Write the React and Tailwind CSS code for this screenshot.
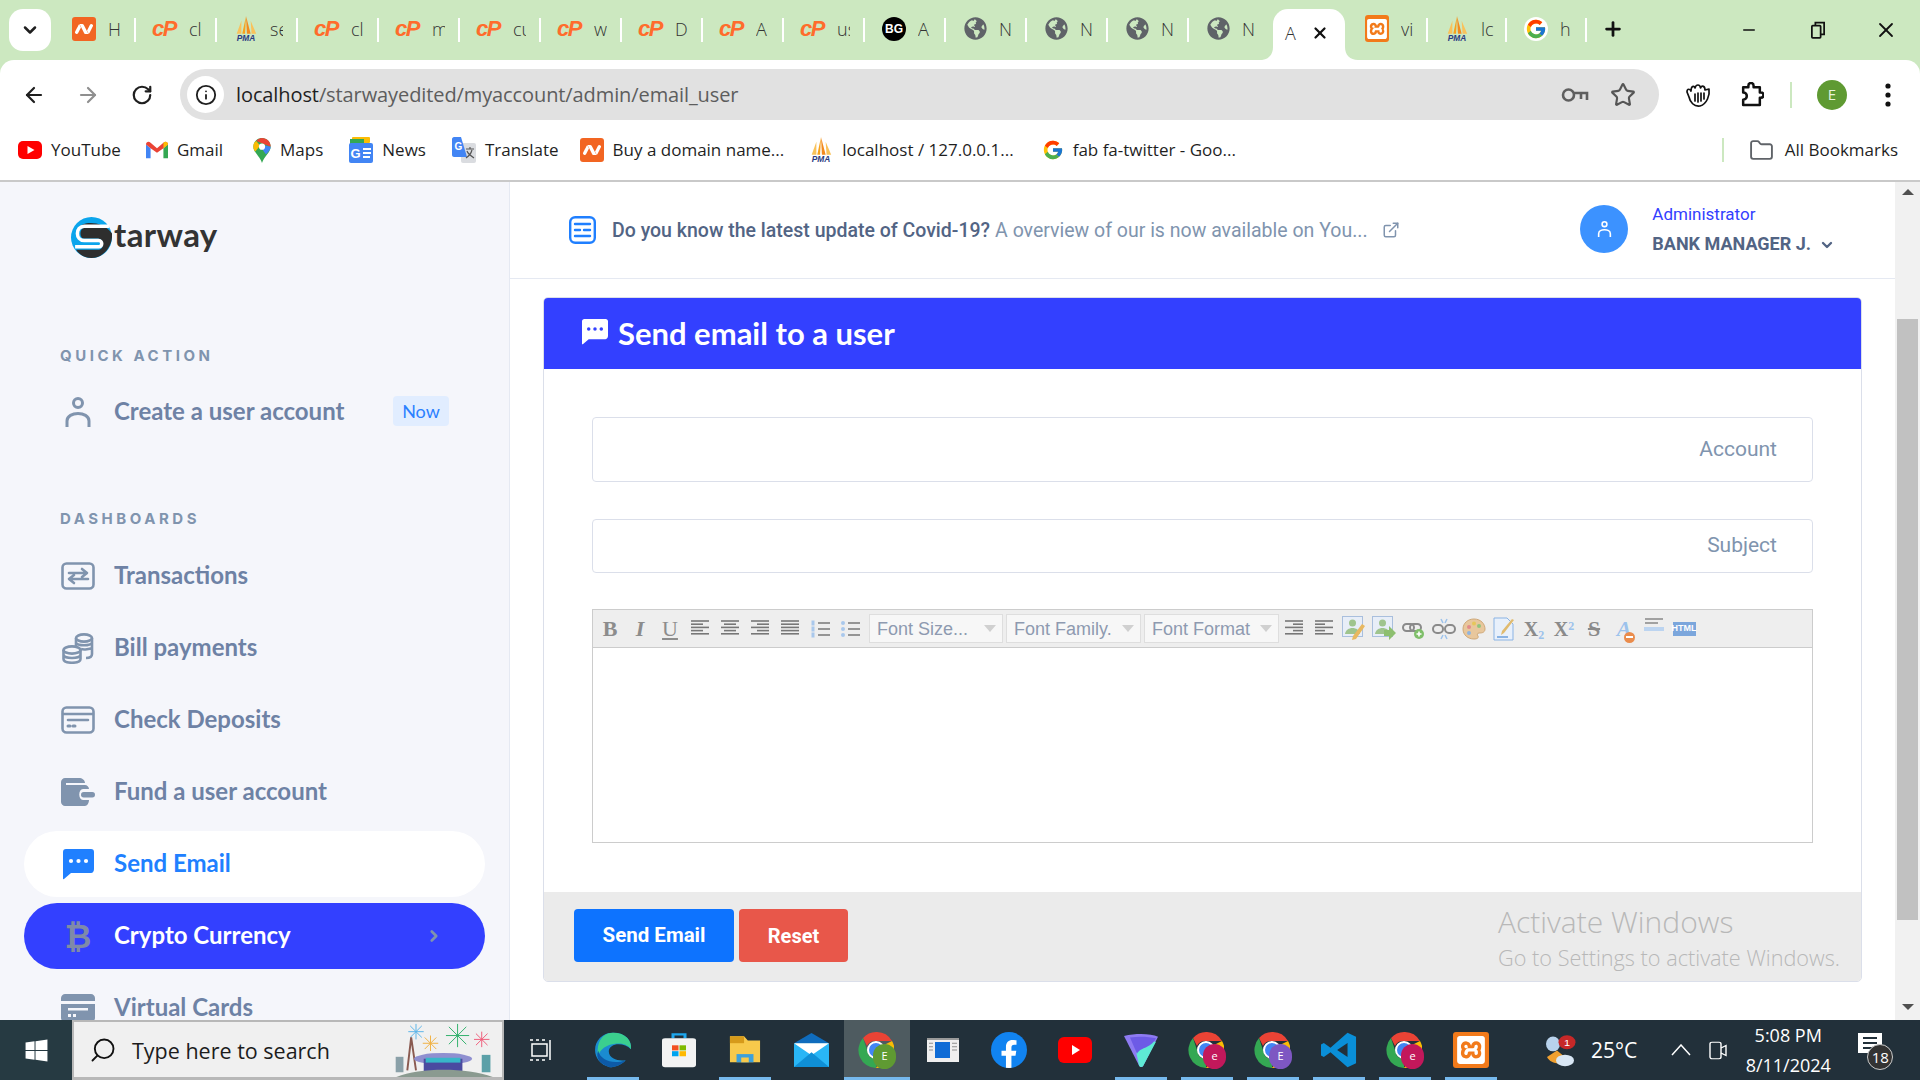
import React from 'react';
import { FcGoogle } from 'react-icons/fc';
import { SiXampp, SiNamecheap } from 'react-icons/si';
import { FaFacebookF, FaGlobeAmericas, FaWindows } from 'react-icons/fa';
import { ArrowLeft, ArrowRight, RotateCw, Star, ChevronDown, ChevronRight, Plus, X, Minus, Folder, Info, ExternalLink, Search } from 'lucide-react';

const uiFont = 'font-["Open_Sans",sans-serif]';
const navFont = 'font-["Lato",sans-serif]';

const Cp = () => <span className="font-['Liberation_Sans',sans-serif] font-bold italic text-[22px] leading-none tracking-[-1.5px] text-[#ff6c2c] pr-[2px]">cP</span>;
const Nc = () => (
  <span className="w-[24px] h-[24px] rounded-[3px] bg-[#f26522] flex items-center justify-center shrink-0">
    <SiNamecheap className="w-[18px] h-[18px] text-white" />
  </span>
);
const Pma = () => (
  <svg viewBox="0 0 24 28" className="w-[24px] h-[26px] shrink-0">
    <path d="M12 0 L8 19 H11 Z" fill="#f7a21b" />
    <path d="M12 0 L13 19 H17 Z" fill="#f38b1e" />
    <path d="M7 5 L2 19 H7 Z" fill="#f9c25a" />
    <path d="M17 5 L18 19 H23 Z" fill="#f9c25a" />
    <text x="12" y="27" textAnchor="middle" fontSize="9" fontWeight="700" fontStyle="italic" fontFamily="Liberation Sans, sans-serif" fill="#2b3a80">PMA</text>
  </svg>
);
const Bg = () => <span className="w-[24px] h-[24px] rounded-full bg-black text-white text-[12px] font-bold flex items-center justify-center font-['Liberation_Sans',sans-serif]">BG</span>;
const Globe = () => <FaGlobeAmericas className="w-[23px] h-[23px] text-[#5f6368]" />;
const Xampp = () => (
  <span className="w-[24px] h-[27px] rounded-[3px] bg-[#f27a1a] flex items-center justify-center">
    <SiXampp className="w-[20px] h-[20px] text-white" />
  </span>
);
const GIcon = () => <span className="w-[24px] h-[24px] rounded-full bg-white flex items-center justify-center"><FcGoogle className="w-[22px] h-[22px]" /></span>;

const tabs = [
  { icon: <Nc />, label: 'H' },
  { icon: <Cp />, label: 'cl' },
  { icon: <Pma />, label: 'se' },
  { icon: <Cp />, label: 'cl' },
  { icon: <Cp />, label: 'm' },
  { icon: <Cp />, label: 'cu' },
  { icon: <Cp />, label: 'w' },
  { icon: <Cp />, label: 'D' },
  { icon: <Cp />, label: 'A' },
  { icon: <Cp />, label: 'us' },
  { icon: <Bg />, label: 'A' },
  { icon: <Globe />, label: 'N' },
  { icon: <Globe />, label: 'N' },
  { icon: <Globe />, label: 'N' },
  { icon: <Globe />, label: 'N', last: true },
];

const Tab = ({ icon, label, last, width = 'w-[81px]', pad = 'pl-[17px]' }) => (
  <div className={`${width} h-[60px] pb-[3px] flex items-center shrink-0 relative`}>
    <div className={`${pad} flex items-center gap-[12px]`}>
      <span className="w-[24px] flex justify-center">{icon}</span>
      <span className="w-[13px] overflow-hidden text-[18px] font-light text-[#333] leading-none">{label}</span>
    </div>
    {!last && <span className="absolute right-0 top-[18px] h-[24px] w-[2px] bg-white" />}
  </div>
);

const TabStrip = () => (
  <div className={`h-[60px] bg-[#cce8c0] flex items-start pl-[9px] ${uiFont}`}>
    <div className="mt-[9px] w-[42px] h-[42px] rounded-[14px] bg-white flex items-center justify-center mr-[4px] shrink-0">
      <ChevronDown className="w-[20px] h-[20px] text-[#1f1f1f]" strokeWidth={3} />
    </div>
    {tabs.map((t, i) => <Tab key={i} {...t} width={t.last ? 'w-[84px]' : 'w-[81px]'} />)}
    <div className="relative mt-[9px] w-[72px] h-[51px] bg-white rounded-t-[15px] flex items-center pl-[12px] pb-[3px] shrink-0">
      <svg className="absolute -left-[13px] bottom-0 w-[13px] h-[13px]" viewBox="0 0 13 13"><path d="M13 0 V13 H0 C8 13 13 8 13 0 Z" fill="#fff" /></svg>
      <svg className="absolute -right-[13px] bottom-0 w-[13px] h-[13px]" viewBox="0 0 13 13"><path d="M0 0 V13 H13 C5 13 0 8 0 0 Z" fill="#fff" /></svg>
      <span className="text-[18px] font-light text-[#333] leading-none">A</span>
      <X className="w-[18px] h-[18px] ml-[15px] text-[#111]" strokeWidth={3} />
    </div>
    <Tab icon={<Xampp />} label="vi" width="w-[83px]" pad="pl-[20px]" />
    <Tab icon={<Pma />} label="lc" width="w-[79px]" />
    <Tab icon={<GIcon />} label="h" width="w-[80px]" />
    <div className="h-[60px] w-[52px] flex items-center justify-center pb-[3px]">
      <Plus className="w-[22px] h-[22px] text-[#111]" strokeWidth={3} />
    </div>
    <div className="flex-1" />
    <div className="h-[60px] flex items-center pb-[1px]">
      <span className="w-[69px] flex justify-center"><Minus className="w-[18px] h-[18px] text-[#111]" strokeWidth={2} /></span>
      <span className="w-[69px] flex justify-center">
        <svg viewBox="0 0 16 20" className="w-[14px] h-[22px]" fill="none" stroke="#111" strokeWidth="2"><rect x="1" y="5" width="10" height="14" rx="1" /><path d="M5 5 V1.5 H15 V15 H11" /></svg>
      </span>
      <span className="w-[68px] flex justify-center"><X className="w-[24px] h-[24px] text-[#111]" strokeWidth={1.8} /></span>
    </div>
  </div>
);

const Toolbar = () => (
  <div className={`h-[60px] bg-[#cce8c0] ${uiFont}`}>
    <div className="h-[60px] bg-white rounded-t-[14px] flex items-start pt-[9px]">
      <span className="w-[33px] ml-[17px] h-[51px] flex items-center justify-center"><ArrowLeft className="w-[24px] h-[24px] text-[#1f1f1f]" strokeWidth={2.2} /></span>
      <span className="w-[33px] ml-[21px] h-[51px] flex items-center justify-center"><ArrowRight className="w-[24px] h-[24px] text-[#8f8f8f]" strokeWidth={2.2} /></span>
      <span className="w-[33px] ml-[21px] h-[51px] flex items-center justify-center"><RotateCw className="w-[22px] h-[22px] text-[#1f1f1f]" strokeWidth={2.4} /></span>
      <div className="ml-[22px] w-[1479px] h-[51px] rounded-full bg-[#e1e1e1] flex items-center pl-[7px]">
        <span className="w-[37px] h-[37px] rounded-full bg-white flex items-center justify-center"><Info className="w-[22px] h-[22px] text-[#1f1f1f]" strokeWidth={2} /></span>
        <span className="ml-[12px] text-[20px] tracking-[-0.1px] text-[#5d5d5d] leading-none">
          <span className="text-[#1f1f1f]">localhost</span>/starwayedited/myaccount/admin/email_user
        </span>
        <div className="flex-1" />
        <svg viewBox="0 0 28 18" className="w-[28px] h-[18px] mr-[21px]" fill="none" stroke="#5f5f5f" strokeWidth="2.6">
          <circle cx="7.5" cy="9" r="5.5" /><path d="M13 7 H26 V14 M20 8 V13" />
        </svg>
        <Star className="w-[26px] h-[26px] text-[#555] mr-[23px]" strokeWidth={2} />
      </div>
      <div className="h-[51px] flex items-center">
        <svg viewBox="0 0 26 26" className="ml-[26px] w-[26px] h-[26px]" fill="none" stroke="#111" strokeWidth="1.7" strokeLinecap="round" strokeLinejoin="round">
          <path d="M2 10 C2 6 5 7 6 9 C6 4 9 3 10 6 C11 2 15 2 15.5 6 C17 3 20 4 20 8 L24 7 C25 13 22 22 15 24 C9 25 5 20 4 15 Z" />
          <path d="M10 12 V19 M13 11 V20 M16 11 V19 M19 11 V17" />
        </svg>
        <svg viewBox="0 0 24 24" className="ml-[28px] w-[25px] h-[25px]" fill="none" stroke="#111" strokeWidth="2.4" strokeLinejoin="round">
          <path d="M4 5 H9 V3.5 A2.5 2.5 0 0 1 14 3.5 V5 H20 V10 H21 A2.5 2.5 0 0 1 21 15 H20 V22 H4 V17 A2.5 2.5 0 0 0 4 10 Z" />
        </svg>
        <span className="ml-[26px] w-[2px] h-[26px] bg-[#cce8c0]" />
        <span className="ml-[25px] w-[30px] h-[30px] rounded-full bg-[#5f9a32] text-[#e8f3dc] text-[15px] flex items-center justify-center">E</span>
        <svg viewBox="0 0 6 26" className="ml-[38px] w-[6px] h-[26px]" fill="#111"><circle cx="3" cy="4" r="2.6" /><circle cx="3" cy="13" r="2.6" /><circle cx="3" cy="22" r="2.6" /></svg>
      </div>
    </div>
  </div>
);

const YtMark = () => (
  <svg viewBox="0 0 24 18" className="w-[24px] h-[18px] shrink-0"><rect width="24" height="18" rx="5" fill="#f00" /><path d="M9.5 5 L16.5 9 L9.5 13 Z" fill="#fff" /></svg>
);
const GmailMark = () => (
  <svg viewBox="0 0 24 18" className="w-[22px] h-[18px] shrink-0">
    <path d="M0 3 V18 H5 V7 Z" fill="#4285f4" /><path d="M24 3 V18 H19 V7 Z" fill="#34a853" />
    <path d="M0 3 C0 0 3 -1 5 1 L12 7 L19 1 C21 -1 24 0 24 3 L19 7 L12 12 L5 7 Z" fill="#ea4335" />
    <path d="M19 1 C21 -1 24 0 24 3 L19 7 Z" fill="#fbbc04" />
  </svg>
);
const MapsMark = () => (
  <svg viewBox="0 0 18 26" className="w-[18px] h-[25px] shrink-0">
    <path d="M9 0 C14 0 18 4 18 9 C18 15 11 19 9 26 C7 19 0 15 0 9 C0 4 4 0 9 0 Z" fill="#34a853" />
    <path d="M9 0 C14 0 18 4 18 9 L3 3 C5 1 7 0 9 0 Z" fill="#ea4335" />
    <path d="M18 9 C18 12 15 15 13 17 L5 6 Z" fill="#4285f4" />
    <path d="M0 9 C0 6 1 4 3 3 L7 8 L2 14 C1 13 0 11 0 9 Z" fill="#fbbc04" />
    <circle cx="9" cy="9" r="3.2" fill="#fff" />
  </svg>
);
const NewsMark = () => (
  <svg viewBox="0 0 24 26" className="w-[24px] h-[26px] shrink-0">
    <rect x="3" y="0" width="18" height="6" rx="1" fill="#fbbc04" /><rect x="1" y="2" width="14" height="5" fill="#34a853" />
    <rect x="0" y="6" width="24" height="20" rx="2" fill="#4285f4" />
    <text x="6.5" y="21" textAnchor="middle" fontSize="13" fontWeight="700" fontFamily="Liberation Sans, sans-serif" fill="#fff">G</text>
    <path d="M14 12 H22 M14 16 H22 M14 20 H21" stroke="#fff" strokeWidth="2" />
  </svg>
);
const TranslateMark = () => (
  <svg viewBox="0 0 24 26" className="w-[24px] h-[26px] shrink-0">
    <rect x="9" y="6" width="15" height="20" rx="2" fill="#dadce0" />
    <path d="M0 2 C0 1 1 0 2 0 H9 L15 20 H2 C1 20 0 19 0 18 Z" fill="#4285f4" />
    <text x="6.5" y="13" textAnchor="middle" fontSize="10" fontWeight="700" fontFamily="Liberation Sans, sans-serif" fill="#fff">G</text>
    <path d="M14 12 H22 M18 10 V12 M20 13 C19 17 17 19 14 21 M15 14 C16 17 19 19 22 21" stroke="#555" strokeWidth="1.2" fill="none" />
  </svg>
);

const Bookmark = ({ icon, label, className }) => (
  <div className={`flex items-center gap-[9px] ${className}`}>
    {icon}
    <span className="text-[17px] -mt-[2px] text-[#1f1f1f] leading-none whitespace-nowrap">{label}</span>
  </div>
);

const Bookmarks = () => (
  <div className={`h-[60px] bg-white flex items-center ${uiFont}`}>
    <Bookmark icon={<YtMark />} label="YouTube" className="ml-[18px]" />
    <Bookmark icon={<GmailMark />} label="Gmail" className="ml-[25px]" />
    <Bookmark icon={<MapsMark />} label="Maps" className="ml-[30px]" />
    <Bookmark icon={<NewsMark />} label="News" className="ml-[26px]" />
    <Bookmark icon={<TranslateMark />} label="Translate" className="ml-[26px]" />
    <Bookmark icon={<Nc />} label="Buy a domain name..." className="ml-[21px]" />
    <Bookmark icon={<Pma />} label="localhost / 127.0.0.1..." className="ml-[25px]" />
    <Bookmark icon={<FcGoogle className="w-[22px] h-[22px] shrink-0" />} label="fab fa-twitter - Goo..." className="ml-[28px]" />
    <div className="flex-1" />
    <span className="w-[2px] h-[24px] bg-[#cce8c0] mr-[25px]" />
    <Folder className="w-[25px] h-[25px] text-[#5f6368] mr-[11px]" strokeWidth={1.8} />
    <span className="text-[17px] -mt-[2px] text-[#1f1f1f] leading-none mr-[22px] whitespace-nowrap">All Bookmarks</span>
  </div>
);

const Logo = () => (
  <div className="flex items-center">
    <svg viewBox="0 0 40 40" className="w-[41px] h-[41px] shrink-0">
      <circle cx="20" cy="20" r="20" fill="#0ba5ec" />
      <path d="M7 11 C11 4 30 3 40 16 C41 28 32 40 20 40 C14 40 8 37 5 32 L26 32 C33 32 33 21 26 21 L13 21 C8 21 8 11 13 11 Z" fill="#2e2e2e" />
      <path d="M37 9 H13 C4 9 4 23 13 23 H27 C31 23 31 29 27 29 H4" fill="none" stroke="#fff" strokeWidth="3.4" />
    </svg>
    <span className="ml-[2px] -mt-[7px] font-['Lato',sans-serif] text-[33px] font-bold leading-none tracking-[0.4px] text-[#333]">tarway</span>
  </div>
);

const UserIcon = ({ className }) => (
  <svg viewBox="0 0 26 32" className={className} fill="none" stroke="currentColor" strokeWidth="3">
    <circle cx="13" cy="6" r="4.5" /><path d="M2 30 V24 C2 14 24 14 24 24 V30" />
  </svg>
);
const TransIcon = ({ className }) => (
  <svg viewBox="0 0 34 28" className={className} fill="none" stroke="currentColor" strokeWidth="2.6" strokeLinecap="round" strokeLinejoin="round">
    <rect x="1.5" y="1.5" width="31" height="25" rx="4" /><path d="M9 17 H27 M13 13 L8 17 L13 21 M25 11 H8 M21 7 L26 11 L21 15" />
  </svg>
);
const CoinsIcon = ({ className }) => (
  <svg viewBox="0 0 32 31" className={className} fill="none" stroke="currentColor" strokeWidth="2.6">
    <ellipse cx="22" cy="5" rx="8" ry="3.6" /><path d="M14 5 V13 M30 5 V21 C30 24 27 25 24 25 M14 10 C16 13 28 13 30 10 M19 16 C22 17 28 16 30 15" />
    <ellipse cx="10" cy="17" rx="8.5" ry="3.6" /><path d="M1.5 17 V26 C1.5 31 18.5 31 18.5 26 V17 M1.5 22 C3 26 17 26 18.5 22" />
  </svg>
);
const CardIcon = ({ className }) => (
  <svg viewBox="0 0 34 28" className={className} fill="none" stroke="currentColor" strokeWidth="2.6" strokeLinecap="round">
    <rect x="1.5" y="1.5" width="31" height="25" rx="4" /><path d="M2 8 H32 M7 14 H27" /><path d="M7 20 H9 M12 20 H14" strokeWidth="3" />
  </svg>
);
const WalletIcon = ({ className }) => (
  <svg viewBox="0 0 34 28" className={className} fill="currentColor">
    <path d="M4 0 H18 C21 0 24 2 24 5 H5 V7 H24 C26 7 28 9 28 11 H22 C17 11 17 22 22 22 H28 C28 25 26 28 24 28 H4 C2 28 0 26 0 24 V4 C0 2 2 0 4 0 Z" />
    <rect x="20" y="14" width="14" height="5.5" rx="2.7" />
  </svg>
);
const BubbleIcon = ({ className, dot = '#fff' }) => (
  <svg viewBox="0 0 31 31" className={className}>
    <path d="M3 0 H28 C30 0 31 1 31 3 V20 C31 22 30 24 28 24 H8 L1 30 C0.5 30.5 0 30 0 29.5 V3 C0 1 1 0 3 0 Z" fill="currentColor" />
    <circle cx="8" cy="12" r="2.1" fill={dot} /><circle cx="15.5" cy="12" r="2.1" fill={dot} /><circle cx="23" cy="12" r="2.1" fill={dot} />
  </svg>
);
const VirtualIcon = ({ className }) => (
  <svg viewBox="0 0 34 28" className={className} fill="currentColor">
    <path d="M4 0 H30 C32 0 34 2 34 4 V7 H0 V4 C0 2 2 0 4 0 Z" />
    <path d="M0 10 H34 V24 C34 26 32 28 30 28 H4 C2 28 0 26 0 24 Z M7 14 V16.5 H27 V14 Z M7 20 V23 H10 V20 Z M12 20 V23 H15 V20 Z" fillRule="evenodd" />
  </svg>
);

const SectionLabel = ({ children, className }) => (
  <div className={`pl-[60px] font-['Inter',sans-serif] text-[15px] font-bold tracking-[0.235em] leading-none text-[#8094ae] ${className}`}>{children}</div>
);

const NavItem = ({ icon, label, active, selected, right }) => (
  <div className={`mx-[24px] h-[66px] mb-[6px] rounded-full flex items-center pl-[37px] pr-[34px] shrink-0 ${active ? 'bg-white' : selected ? 'bg-[#3340ff]' : ''}`}>
    <span className={`w-[34px] flex justify-center ${active ? 'text-[#2080ff]' : 'text-[#8094ae]'}`}>{icon}</span>
    <span className={`ml-[19px] -mt-[2px] text-[24px] font-bold leading-none whitespace-nowrap ${active ? 'text-[#2080ff]' : selected ? 'text-white' : 'text-[#6e82a5]'}`}>{label}</span>
    <div className="flex-1" />
    {right}
  </div>
);

const Sidebar = () => (
  <aside className={`w-[510px] shrink-0 bg-[#f5f6fb] border-r border-[#e5e9f2] overflow-hidden flex flex-col ${navFont}`}>
    <div className="pl-[71px] pt-[35px] h-[166px] shrink-0"><Logo /></div>
    <SectionLabel>QUICK ACTION</SectionLabel>
    <div className="mt-[15px] mx-[24px] h-[66px] flex items-center pl-[37px] pr-[36px] shrink-0">
      <span className="w-[34px] flex justify-center text-[#8094ae] mt-[3px]"><UserIcon className="w-[26px] h-[32px]" /></span>
      <span className="ml-[19px] text-[24px] font-bold leading-none text-[#6e82a5] whitespace-nowrap">Create a user account</span>
      <div className="flex-1" />
      <span className="w-[56px] h-[30px] rounded-[4px] bg-[#e1edff] text-[#2b80ff] text-[18px] flex items-center justify-center">Now</span>
    </div>
    <SectionLabel className="mt-[67px]">DASHBOARDS</SectionLabel>
    <div className="mt-[17px] flex flex-col">
      <NavItem icon={<TransIcon className="w-[34px] h-[28px]" />} label="Transactions" />
      <NavItem icon={<CoinsIcon className="w-[32px] h-[31px]" />} label="Bill payments" />
      <NavItem icon={<CardIcon className="w-[34px] h-[28px]" />} label="Check Deposits" />
      <NavItem icon={<WalletIcon className="w-[34px] h-[28px]" />} label="Fund a user account" />
      <NavItem active icon={<BubbleIcon className="w-[31px] h-[31px]" />} label="Send Email" />
      <NavItem selected icon={<span className="text-[33px] font-bold leading-none text-[#7f8aa8] font-['Liberation_Sans',sans-serif]">₿</span>} label="Crypto Currency" right={<ChevronRight className="w-[18px] h-[18px] text-[#8094ae] mr-[8px]" strokeWidth={3.5} />} />
      <NavItem icon={<VirtualIcon className="w-[34px] h-[28px]" />} label="Virtual Cards" />
    </div>
  </aside>
);

const TopBar = () => (
  <div className="h-[97px] shrink-0 border-b border-[#e5e9f2] flex items-center font-['Roboto',sans-serif]">
    <svg viewBox="0 0 27 28" className="ml-[59px] w-[27px] h-[28px] shrink-0" fill="none" stroke="#1f7fff" strokeWidth="2.4" strokeLinecap="round">
      <rect x="1.2" y="1.2" width="24.6" height="25.6" rx="5" /><path d="M6 8 H21 M6 14 H11 M15 14 H21 M6 20 H21" />
    </svg>
    <span className="ml-[16px] mt-[2px] text-[19.5px] font-medium text-[#526484] whitespace-nowrap leading-none">Do you know the latest update of Covid-19?</span>
    <span className="ml-[5px] mt-[2px] text-[19.5px] text-[#8094ae] whitespace-nowrap leading-none">A overview of our is now available on You...</span>
    <ExternalLink className="ml-[14px] w-[18px] h-[18px] text-[#8094ae] shrink-0" strokeWidth={2} />
    <div className="flex-1" />
    <span className="w-[48px] h-[48px] -mt-[2px] rounded-full bg-[#3c92ff] flex items-center justify-center text-white shrink-0">
      <UserIcon className="w-[15px] h-[17px]" />
    </span>
    <div className="ml-[24px] mr-[60px] flex flex-col gap-[12px] -mt-[2px]">
      <span className="text-[17px] leading-none text-[#3340ff]">Administrator</span>
      <span className="flex items-center text-[18px] font-bold leading-none text-[#526484] whitespace-nowrap">
        BANK MANAGER J.
        <ChevronDown className="ml-[8px] mt-[2px] w-[16px] h-[16px]" strokeWidth={3.5} />
      </span>
    </div>
  </div>
);

// old tinymce toolbar glyphs
const Lines = ({ rows }) => (
  <svg viewBox="0 0 20 20" className="w-[20px] h-[20px]" stroke="#777" strokeWidth="1.6">
    {rows.map((r, i) => <path key={i} d={`M${r[0]} ${2 + i * 3.2} H${r[1]}`} />)}
  </svg>
);
const Tool = ({ children }) => <span className="w-[30px] h-[30px] flex items-center justify-center shrink-0">{children}</span>;
const Letter = ({ children, className }) => <span className={`font-['Liberation_Serif',serif] text-[22px] leading-none text-[#8c8c8c] ${className}`}>{children}</span>;
const Sel = ({ label, width }) => (
  <span className={`${width} h-[29px] bg-[#f7f7f7] border border-[#dedede] flex items-center pl-[7px] pr-[6px] shrink-0`}>
    <span className="text-[18px] text-[#8e9ab0] leading-none font-['Liberation_Sans',sans-serif] whitespace-nowrap">{label}</span>
    <span className="flex-1" />
    <span className="w-0 h-0 border-x-[6px] border-x-transparent border-t-[7px] border-t-[#d0d0d0]" />
  </span>
);
const ListIcon = ({ num }) => (
  <svg viewBox="0 0 20 20" className="w-[20px] h-[20px]">
    {[4, 10, 16].map((y) => <path key={y} d={`M8 ${y} H20`} stroke="#777" strokeWidth="1.5" />)}
    {[4, 10, 16].map((y) => num
      ? <rect key={y} x="1.5" y={y - 2.5} width="3" height="5" fill="#a9c8ec" />
      : <circle key={y} cx="3" cy={y} r="2" fill="#a9c8ec" />)}
  </svg>
);
const Pic = ({ over }) => (
  <svg viewBox="0 0 24 25" className="w-[24px] h-[25px]">
    <rect x="0.5" y="0.5" width="20" height="20" fill="#e8eef8" stroke="#a9bfdd" />
    <circle cx="10.5" cy="7" r="3.5" fill="#9fc48e" /><path d="M3 18 C4 10 17 10 18 18 Z" fill="#9fc48e" />
    {over}
  </svg>
);

const EditorToolbar = () => (
  <div className="h-[38px] bg-[#eeeeee] border-b border-[#cccccc] flex items-center pl-[2px] shrink-0">
    <Tool><Letter className="font-bold">B</Letter></Tool>
    <Tool><Letter className="font-bold italic">I</Letter></Tool>
    <Tool><Letter className="underline text-[20px]">U</Letter></Tool>
    <Tool><Lines rows={[[1, 19], [1, 13], [1, 19], [1, 13], [1, 19]]} /></Tool>
    <Tool><Lines rows={[[1, 19], [4, 16], [1, 19], [4, 16], [1, 19]]} /></Tool>
    <Tool><Lines rows={[[1, 19], [7, 19], [1, 19], [7, 19], [1, 19]]} /></Tool>
    <Tool><Lines rows={[[1, 19], [1, 19], [1, 19], [1, 19], [1, 19]]} /></Tool>
    <Tool><ListIcon num /></Tool>
    <Tool><ListIcon /></Tool>
    <span className="w-[4px] shrink-0" />
    <div className="flex gap-[3px]">
      <Sel label="Font Size..." width="w-[134px]" />
      <Sel label="Font Family." width="w-[135px]" />
      <Sel label="Font Format" width="w-[135px]" />
    </div>
    <Tool><Lines rows={[[1, 19], [9, 19], [1, 19], [9, 19], [1, 19]]} /></Tool>
    <Tool><Lines rows={[[1, 19], [1, 11], [1, 19], [1, 11], [1, 19]]} /></Tool>
    <Tool><Pic over={<path d="M23 10 L14 23 L10 24 L11 20 L20 8 Z" fill="#e8b860" />} /></Tool>
    <Tool><Pic over={<path d="M12 14 H17 V10 L24 17 L17 24 V20 H12 Z" fill="#8dbf6f" />} /></Tool>
    <Tool>
      <svg viewBox="0 0 24 22" className="w-[24px] h-[22px]" fill="none"><rect x="1" y="6" width="11" height="7" rx="3.5" stroke="#8a8a8a" strokeWidth="2" /><rect x="8" y="6" width="11" height="7" rx="3.5" stroke="#8a8a8a" strokeWidth="2" /><circle cx="17" cy="16" r="5" fill="#7fbf6a" /><path d="M14.5 16 H19.5 M17 13.5 V18.5" stroke="#fff" strokeWidth="1.6" /></svg>
    </Tool>
    <Tool>
      <svg viewBox="0 0 24 22" className="w-[24px] h-[22px]" fill="none"><rect x="1" y="7" width="10" height="8" rx="4" stroke="#8a8a8a" strokeWidth="2" /><rect x="13" y="7" width="10" height="8" rx="4" stroke="#8a8a8a" strokeWidth="2" /><path d="M9 1 L11 5 M15 1 L13 5 M9 21 L11 17 M15 21 L13 17" stroke="#9cc2ec" strokeWidth="1.5" /></svg>
    </Tool>
    <Tool>
      <svg viewBox="0 0 24 22" className="w-[24px] h-[22px]"><path d="M12 1 C19 1 23 6 23 11 C23 15 19 15 17 15 C15 15 15 17 16 18 C17 20 15 21 12 21 C6 21 1 17 1 11 C1 5 6 1 12 1 Z" fill="#e8c79c" stroke="#cfa878" /><circle cx="7" cy="9" r="2" fill="#e38a8a" /><circle cx="12" cy="5.5" r="2" fill="#e6c75a" /><circle cx="17" cy="8" r="2" fill="#90c47d" /><circle cx="7" cy="15" r="2" fill="#8fb4e0" /></svg>
    </Tool>
    <Tool>
      <svg viewBox="0 0 22 24" className="w-[22px] h-[24px]"><path d="M1 1 H14 L20 7 V23 H1 Z" fill="#e8f0fb" stroke="#8ab3e4" /><path d="M21 3 L11 16 L8 18 L9 14 L19 2 Z" fill="#e0bb70" /><path d="M4 20 H15" stroke="#8ab3e4" strokeWidth="2" /></svg>
    </Tool>
    <Tool><span className="font-['Liberation_Serif',serif] font-bold text-[20px] text-[#8a8a8a] leading-none">X<sub className="text-[12px] text-[#9cc2ec]">2</sub></span></Tool>
    <Tool><span className="font-['Liberation_Serif',serif] font-bold text-[20px] text-[#8a8a8a] leading-none">X<sup className="text-[12px] text-[#9cc2ec]">2</sup></span></Tool>
    <Tool><span className="font-['Liberation_Serif',serif] font-bold text-[22px] text-[#8a8a8a] leading-none line-through">S</span></Tool>
    <Tool>
      <span className="relative font-['Liberation_Serif',serif] font-bold italic text-[22px] text-[#9cc2ec] leading-none">
        A<span className="absolute -right-[4px] -bottom-[3px] w-[11px] h-[11px] rounded-full bg-[#ea8c4c] flex items-center justify-center"><span className="w-[7px] h-[2px] bg-white" /></span>
      </span>
    </Tool>
    <Tool>
      <svg viewBox="0 0 20 20" className="w-[20px] h-[20px] -mt-[4px]"><path d="M1 2 H19 M1 6 H14" stroke="#888" strokeWidth="1.6" /><rect x="0" y="10" width="20" height="4" fill="#bcd4f0" /></svg>
    </Tool>
    <Tool><span className="w-[23px] h-[14px] bg-[#7ba6dc] text-white text-[9px] font-bold flex items-center justify-center leading-none font-['Liberation_Sans',sans-serif]">HTML</span></Tool>
  </div>
);

const Card = () => (
  <section className="relative mt-[18px] mx-[33px] border border-[#dbdfea] rounded-[5px] overflow-hidden font-['Lato',sans-serif]">
    <header className="h-[71px] bg-[#3340ff] flex items-center pl-[38px] text-white">
      <BubbleIcon className="w-[26px] h-[26px] -mt-[4px]" dot="#3340ff" />
      <h1 className="ml-[10px] text-[31px] font-bold leading-none whitespace-nowrap">Send email to a user</h1>
    </header>
    <div className="px-[48px] pt-[48px] pb-[49px] flex flex-col">
      <div className="h-[65px] border border-[#dbdfea] rounded-[4px] flex items-center justify-end pr-[35px] text-[21px] text-[#8094ae] font-['Roboto',sans-serif]">Account</div>
      <div className="mt-[37px] h-[54px] border border-[#dbdfea] rounded-[4px] flex items-center justify-end pr-[35px] text-[21px] text-[#8094ae] font-['Roboto',sans-serif]">Subject</div>
      <div className="mt-[36px] h-[234px] border border-[#cccccc] flex flex-col">
        <EditorToolbar />
        <div className="flex-1 bg-white" />
      </div>
    </div>
    <footer className="h-[89px] bg-[#ebebeb] flex items-start pl-[30px] pt-[17px] gap-[5px] font-['Roboto',sans-serif]">
      <button className="w-[160px] h-[53px] rounded-[4px] bg-[#0d73ff] text-white text-[20.5px] font-bold">Send Email</button>
      <button className="w-[109px] h-[53px] rounded-[4px] bg-[#e8574a] text-white text-[20px] font-bold">Reset</button>
    </footer>
    <div className={`absolute left-[954px] bottom-[12px] text-[#b8b8b8] font-light ${uiFont}`}>
      <div className="text-[30px] leading-none">Activate Windows</div>
      <div className="mt-[10px] text-[21.7px] leading-none whitespace-nowrap">Go to Settings to activate Windows.</div>
    </div>
  </section>
);

const Scrollbar = () => (
  <div className="w-[25px] shrink-0 bg-[#f1f1f1] flex flex-col items-center">
    <span className="mt-[7px] w-0 h-0 shrink-0 border-x-[6px] border-x-transparent border-b-[6px] border-b-[#505050]" />
    <span className="mt-[124px] w-[21px] h-[601px] shrink-0 bg-[#c1c1c1]" />
    <span className="mt-[84px] w-0 h-0 shrink-0 border-x-[6px] border-x-transparent border-t-[6px] border-t-[#505050]" />
  </div>
);

const Chrome = ({ badge, letter }) => (
  <span className="relative w-[38px] h-[38px] flex items-center">
    <svg viewBox="0 0 36 36" className="w-[36px] h-[36px]">
      <path d="M18 0 A18 18 0 0 1 34 9 H18 A9 9 0 0 0 9 14 L5 6 A18 18 0 0 1 18 0 Z" fill="#ea4335" />
      <path d="M34 9 A18 18 0 0 1 18 36 L26 23 A9 9 0 0 0 26 13 Z" fill="#fbbc04" />
      <path d="M18 36 A18 18 0 0 1 5 6 L11 24 A9 9 0 0 0 18 27 Z" fill="#34a853" />
      <circle cx="18" cy="18" r="8" fill="#4285f4" stroke="#fff" strokeWidth="2" />
    </svg>
    <span className={`absolute right-0 bottom-0 w-[23px] h-[25px] rounded-full ${badge} text-white text-[11px] flex items-center justify-center`}>{letter}</span>
  </span>
);

const apps = [
  {
    on: true,
    el: (
      <svg viewBox="0 0 36 46" preserveAspectRatio="none" className="w-[38px] h-[36px]">
        <path d="M18 1 C30 1 36 11 35 22 C28 12 14 14 14 25 C14 34 24 38 30 36 C26 42 20 45 15 45 C6 42 1 33 1 23 C1 11 8 1 18 1 Z" fill="#1a8bd0" />
        <path d="M18 1 C30 1 36 11 35 22 C32 16 26 14 20 15 C12 16 6 22 4 30 C2 18 6 1 18 1 Z" fill="#3bcf8e" />
        <path d="M15 45 C6 42 1 33 4 24 C6 36 18 42 30 36 C26 42 20 45 15 45 Z" fill="#0d5aa7" />
      </svg>
    ),
  },
  {
    el: (
      <svg viewBox="0 0 36 46" preserveAspectRatio="none" className="w-[36px] h-[36px]">
        <path d="M12 8 V3 H24 V8" fill="none" stroke="#1ea7ee" strokeWidth="3" /><rect x="1" y="8" width="34" height="37" rx="3" fill="#f3f3f3" />
        <rect x="11" y="17" width="6.5" height="6.5" fill="#f25022" /><rect x="18.5" y="17" width="6.5" height="6.5" fill="#7fba00" />
        <rect x="11" y="24.5" width="6.5" height="6.5" fill="#00a4ef" /><rect x="18.5" y="24.5" width="6.5" height="6.5" fill="#ffb900" />
      </svg>
    ),
  },
  {
    on: true,
    el: (
      <svg viewBox="0 0 34 44" preserveAspectRatio="none" className="w-[32px] h-[30px]">
        <path d="M1 2 H16 L20 8 H33 V40 H1 Z" fill="#f7c94b" /><rect x="1" y="2" width="15" height="10" fill="#d69a1a" />
        <rect x="8" y="28" width="18" height="12" fill="#3ca0dc" /><rect x="13" y="33" width="8" height="7" fill="#f7c94b" />
      </svg>
    ),
  },
  {
    el: (
      <svg viewBox="0 0 36 46" preserveAspectRatio="none" className="w-[35px] h-[34px]">
        <path d="M18 0 L36 14 H0 Z" fill="#0f6cbd" /><rect x="0" y="14" width="36" height="32" fill="#29b6f6" />
        <path d="M0 14 H36 L18 30 Z" fill="#fff" /><path d="M0 46 L18 26 L36 46 Z" fill="#0f8fd6" />
      </svg>
    ),
  },
  { on: true, active: true, el: <Chrome badge="bg-[#5f9a32]" letter="E" /> },
  {
    el: (
      <svg viewBox="0 0 32 36" preserveAspectRatio="none" className="w-[32px] h-[24px]">
        <rect width="32" height="36" fill="#efefef" /><rect y="0" width="32" height="3" fill="#9a9a9a" />
        <rect x="8" y="6" width="15" height="24" fill="#0f6cd6" /><path d="M2 8 H6 M2 13 H6 M2 18 H6 M25 8 H30 M25 13 H30 M25 18 H30" stroke="#8f8f8f" strokeWidth="1.5" />
      </svg>
    ),
  },
  { el: <span className="w-[36px] h-[36px] rounded-full bg-[#1183f0] flex items-end justify-center overflow-hidden"><FaFacebookF className="w-[18px] h-[28px] text-white" /></span> },
  {
    el: (
      <svg viewBox="0 0 36 26" className="w-[36px] h-[26px]"><rect x="1" y="0" width="34" height="26" rx="6" fill="#f00" /><path d="M15 8 L23 13 L15 18 Z" fill="#fff" /></svg>
    ),
  },
  {
    on: true,
    el: (
      <svg viewBox="0 0 36 46" preserveAspectRatio="none" className="w-[36px] h-[34px]">
        <path d="M1 4 C14 0 28 1 35 5 L20 45 C18 47 17 46 16 44 Z" fill="#8e7bf2" />
        <path d="M11 12 C18 10 26 11 33 12 L20 45 C18 47 17 46 16 44 Z" fill="#5eead4" />
        <path d="M7 6 C16 4 26 5 33 7 C27 22 18 18 14 28 Z" fill="#6d5be6" />
      </svg>
    ),
  },
  { on: true, el: <Chrome badge="bg-[#c2185b]" letter="e" /> },
  { on: true, el: <Chrome badge="bg-[#7e57c2]" letter="E" /> },
  {
    on: true,
    el: (
      <svg viewBox="0 0 38 46" preserveAspectRatio="none" className="w-[36px] h-[36px]">
        <path d="M28 1 L37 6 V40 L28 45 L10 26 L3 32 L0 30 V16 L3 14 L10 20 Z M28 14 L17 23 L28 32 Z" fill="#0a8fd8" fillRule="evenodd" />
      </svg>
    ),
  },
  { on: true, el: <Chrome badge="bg-[#c2185b]" letter="e" /> },
  { on: true, el: <span className="w-[36px] h-[36px] rounded-[3px] bg-[#f27a1a] flex items-center justify-center"><SiXampp className="w-[28px] h-[28px] text-white" /></span> },
];

const Taskbar = () => (
  <div className={`h-[60px] shrink-0 bg-[#22303a] flex items-stretch ${uiFont}`}>
    <div className="w-[72px] bg-[#263a42] flex items-center justify-center shrink-0"><FaWindows className="w-[25px] h-[25px] text-white" /></div>
    <div className="w-[432px] bg-[#f0f0f0] border-[2px] border-[#b8b8b8] border-b-[3px] flex items-center pl-[15px] relative overflow-hidden shrink-0">
      <Search className="w-[28px] h-[28px] text-[#111] -scale-x-100" strokeWidth={1.6} />
      <span className="ml-[15px] mt-[2px] text-[21.5px] text-[#1c1c1c] leading-none whitespace-nowrap">Type here to search</span>
      <svg viewBox="0 0 114 60" className="absolute right-0 top-0 w-[114px] h-[58px]" fill="none">
        <g stroke="#5ab4e8" strokeWidth="1"><path d="M27 2 L27 18 M19 10 H35 M21 4 L33 16 M33 4 L21 16" /></g>
        <g stroke="#2fb06a" strokeWidth="1"><path d="M70 2 L70 26 M58 14 H82 M61 5 L79 23 M79 5 L61 23" /></g>
        <g stroke="#f0b040" strokeWidth="1"><path d="M42 14 V30 M34 22 H50 M36 16 L48 28 M48 16 L36 28" /></g>
        <g stroke="#ef5a78" strokeWidth="1"><path d="M95 10 V26 M87 18 H103 M89 12 L101 24 M101 12 L89 24" /></g>
        <path d="M22 16 L18 50 M22 16 L27 50" stroke="#8a5a50" strokeWidth="2" />
        <rect x="6" y="36" width="8" height="16" fill="#8aa0a8" /><rect x="95" y="34" width="9" height="18" fill="#5ba0a8" />
        <ellipse cx="55" cy="38" rx="30" ry="6" fill="#8f8fd0" /><rect x="35" y="38" width="40" height="14" fill="#4a4aa0" /><rect x="37" y="37" width="36" height="5" fill="#38b6c8" />
        <path d="M0 60 C25 46 85 46 114 60 Z" fill="#8a9a90" />
      </svg>
    </div>
    <div className="w-[73px] flex items-center justify-center shrink-0">
      <svg viewBox="0 0 24 24" className="w-[24px] h-[24px]" fill="none" stroke="#fff" strokeWidth="1.5"><rect x="3" y="6" width="15" height="12" /><path d="M1 2 H4 M7 2 H10 M13 2 H16 M21 2 V22 M1 22 H4 M7 22 H10 M13 22 H16" /></svg>
    </div>
    <div className="flex items-stretch ml-[3px]">
      {apps.map((a, i) => (
        <div key={i} className={`relative w-[66px] flex items-center justify-center shrink-0 ${a.active ? 'bg-[#4e5b60]' : ''}`}>
          {a.el}
          {a.on && <span className={`absolute bottom-0 h-[3px] bg-[#76b9ed] ${a.active ? 'left-0 right-0' : 'left-[7px] right-[7px]'}`} />}
        </div>
      ))}
    </div>
    <div className="flex items-center flex-1 text-white">
      <svg viewBox="0 0 36 40" preserveAspectRatio="none" className="ml-[39px] w-[36px] h-[33px] shrink-0">
        <path d="M4 28 C8 38 22 38 24 30 L14 20 Z" fill="#f0a030" />
        <ellipse cx="10" cy="12" rx="7" ry="9" fill="#b8d2ec" /><ellipse cx="22" cy="32" rx="9" ry="7" fill="#d8e6f4" />
        <circle cx="24" cy="10" r="8.5" fill="#c62828" /><text x="24" y="14" textAnchor="middle" fontSize="11" fill="#fff" fontFamily="Liberation Sans, sans-serif">1</text>
      </svg>
      <span className="ml-[12px] text-[21px] leading-none whitespace-nowrap">25°C</span>
      <svg viewBox="0 0 20 12" className="ml-[34px] w-[20px] h-[12px] shrink-0" fill="none" stroke="#fff" strokeWidth="1.5"><path d="M1 11 L10 1 L19 11" /></svg>
      <svg viewBox="0 0 18 28" preserveAspectRatio="none" className="ml-[18px] w-[18px] h-[23px] shrink-0" fill="none" stroke="#fff" strokeWidth="1.4"><rect x="1" y="4" width="11" height="20" rx="2" /><path d="M12 11 L17 8 V20 L12 17" /></svg>
      <div className="ml-[11px] w-[100px] flex flex-col items-center gap-[12px] text-[18px] leading-none shrink-0">
        <span>5:08 PM</span>
        <span>8/11/2024</span>
      </div>
      <div className="relative ml-[20px] -mt-[14px] w-[24px] h-[20px] bg-white shrink-0 flex flex-col justify-center gap-[3px] px-[5px]">
        <span className="h-[2px] bg-[#22303a]" /><span className="h-[2px] bg-[#22303a]" /><span className="h-[2px] bg-[#22303a]" />
        <span className="absolute left-[9px] top-[11px] w-[26px] h-[26px] rounded-full bg-[#333] border border-[#ccc] text-white text-[15px] flex items-center justify-center">18</span>
      </div>
    </div>
  </div>
);

const App = () => (
  <div className="w-[1920px] h-[1080px] flex flex-col overflow-hidden bg-white">
    <TabStrip />
    <Toolbar />
    <Bookmarks />
    <div className="h-[2px] bg-[#c9c9c9] shrink-0" />
    <div className="flex flex-1 min-h-0">
      <Sidebar />
      <main className="flex-1 min-w-0 overflow-hidden bg-white">
        <TopBar />
        <Card />
      </main>
      <Scrollbar />
    </div>
    <Taskbar />
  </div>
);

export default App;
